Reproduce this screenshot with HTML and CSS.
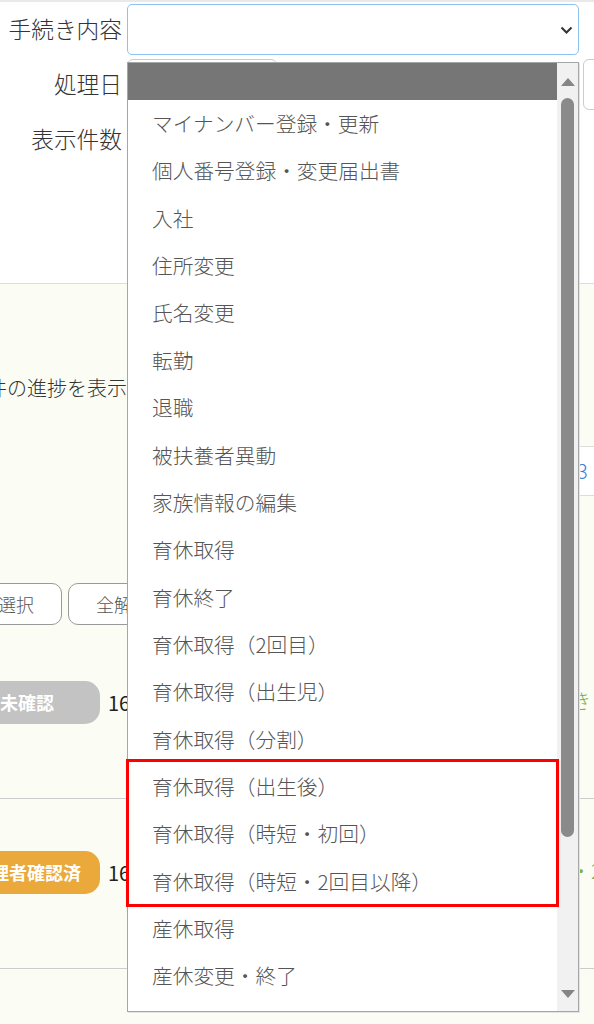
FILE: index.html
```html
<!DOCTYPE html>
<html lang="ja">
<head>
    <meta charset="UTF-8">
    <meta name="viewport" content="width=device-width, initial-scale=1.0">
    <title>手続き一覧</title>
    <link rel="stylesheet" href="styles.css">
</head>
<body>
    <section class="search">
        <div class="field">
            <label class="field-label">手続き内容</label>
            <div class="select">
                <svg class="chevron" width="13" height="8" viewBox="0 0 13 8"><polyline points="1.5,1.5 6.5,6.5 11.5,1.5" fill="none" stroke="#333" stroke-width="2"/></svg>
            </div>
        </div>
        <div class="field">
            <label class="field-label">処理日</label>
            <div class="date-range">
                <div class="input date-input"></div>
                <span class="tilde">～</span>
                <div class="input period-btn"></div>
            </div>
        </div>
        <div class="field">
            <label class="field-label">表示件数</label>
            <div class="input count-input"></div>
        </div>
    </section>

    <section class="results">
        <p class="summary">件の進捗を表示しています</p>
        <div class="pager">
            <span class="pager-item">3</span>
        </div>
        <div class="actions">
            <button class="action-btn">全選択</button>
            <button class="action-btn">全解除</button>
        </div>
        <div class="task-list">
            <div class="task-row">
                <span class="badge badge-gray">未確認</span>
                <span class="task-num">16</span>
                <span class="task-link">育休取得の手続き</span>
            </div>
            <div class="task-row">
                <span class="badge badge-orange">管理者確認済</span>
                <span class="task-num">16</span>
                <span class="task-link">育休取得（時短・2回目以降）</span>
            </div>
        </div>
    </section>

    <div class="dropdown">
        <ul class="options">
            <li class="option is-active"></li>
            <li class="option">マイナンバー登録・更新</li>
            <li class="option">個人番号登録・変更届出書</li>
            <li class="option">入社</li>
            <li class="option">住所変更</li>
            <li class="option">氏名変更</li>
            <li class="option">転勤</li>
            <li class="option">退職</li>
            <li class="option">被扶養者異動</li>
            <li class="option">家族情報の編集</li>
            <li class="option">育休取得</li>
            <li class="option">育休終了</li>
            <li class="option">育休取得（2回目）</li>
            <li class="option">育休取得（出生児）</li>
            <li class="option">育休取得（分割）</li>
            <li class="option">育休取得（出生後）</li>
            <li class="option">育休取得（時短・初回）</li>
            <li class="option">育休取得（時短・2回目以降）</li>
            <li class="option">産休取得</li>
            <li class="option">産休変更・終了</li>
        </ul>
        <div class="scrollbar">
            <div class="scroll-arrow scroll-up">
                <svg width="14" height="8" viewBox="0 0 14 8"><polygon points="7,0 14,8 0,8" fill="#858585"/></svg>
            </div>
            <div class="scroll-thumb"></div>
            <div class="scroll-rest"></div>
            <div class="scroll-arrow">
                <svg width="14" height="8" viewBox="0 0 14 8"><polygon points="0,0 14,0 7,8" fill="#858585"/></svg>
            </div>
        </div>
    </div>

    <div class="highlight"></div>
</body>
</html>
```

FILE: styles.css
```css
:root {
    --text: #333333;
    --option-text: #555555;
    --line: #cccccc;
    --cream: #fbfdf4;
    --link: #7cb342;
}

* {
    box-sizing: border-box;
}

body {
    margin: 0;
    height: 1024px;
    font-family: "Noto Sans CJK JP", "Noto Sans", sans-serif;
    font-weight: 300;
    color: var(--text);
    background: var(--cream);
    overflow: hidden;
    position: relative;
}

/* search form */
.search {
    height: 284px;
    padding-top: 2px;
    background: #fff;
    border-top: 2px solid #e9e9e9;
    border-bottom: 1px solid #dddddd;
    display: flex;
    flex-direction: column;
    gap: 4px;
}

.field {
    display: grid;
    grid-template-columns: 122px 1fr;
    column-gap: 5px;
    height: 51px;
    align-items: center;
}

.field-label {
    text-align: right;
    font-size: 22.7px;
    line-height: 1;
    white-space: nowrap;
}

.select {
    height: 51px;
    margin-right: 15px;
    border: 1px solid #8ec1f2;
    border-radius: 5px;
    background: #fff;
    display: flex;
    align-items: center;
    justify-content: flex-end;
    padding-right: 5px;
}

.input {
    height: 51px;
    border: 1px solid #cccccc;
    border-radius: 6px;
    background: #fff;
}

.date-range {
    display: flex;
    align-items: center;
}

.date-input {
    width: 150px;
    flex: none;
}

.tilde {
    width: 40px;
    text-align: center;
    font-size: 20px;
}

.period-btn {
    flex: none;
    width: 60px;
    margin-left: auto;
    margin-right: -49px;
}

.count-input {
    width: 150px;
}

/* results */
.results {
    display: flex;
    flex-direction: column;
}

.summary {
    margin: 0 0 0 -13px;
    height: 162px;
    padding-top: 89px;
    font-size: 20px;
    line-height: 30px;
    white-space: nowrap;
}

.pager {
    display: flex;
    height: 50px;
    padding-left: 566px;
}

.pager-item {
    border: 1px solid #dddddd;
    border-right: none;
    background: #fff;
    padding: 0 10px;
    line-height: 48px;
    font-size: 20px;
    color: #3a7bd5;
}

.actions {
    display: flex;
    gap: 6px;
    margin-top: 87px;
    margin-left: -48px;
}

.action-btn {
    height: 42px;
    padding: 0 27px;
    border: 1px solid #999999;
    border-radius: 10px;
    background: #fff;
    font-family: inherit;
    font-weight: 300;
    font-size: 18px;
    color: var(--option-text);
}

.task-list {
    margin-top: 4px;
}

.task-row {
    display: flex;
    align-items: flex-start;
    height: 170px;
    padding-top: 52px;
    border-bottom: 1px solid var(--line);
    white-space: nowrap;
}

.badge {
    flex: none;
    width: 146px;
    height: 43px;
    margin-left: -46px;
    border-radius: 15px;
    line-height: 43px;
    text-align: center;
    font-size: 18px;
    font-weight: bold;
    color: #fff;
}

.badge-gray {
    background: #c3c3c3;
}

.badge-orange {
    background: #eaa93a;
}

.task-num {
    flex: none;
    width: 323px;
    margin-left: 8px;
    line-height: 43px;
    font-size: 20px;
    font-weight: 400;
    color: #222222;
}

.task-link {
    line-height: 40px;
    font-size: 20px;
    color: var(--link);
}

/* opened select list */
.dropdown {
    position: absolute;
    left: 127px;
    top: 62px;
    width: 452px;
    height: 950px;
    border: 1px solid #a6a6a6;
    background: #fff;
    display: flex;
    box-shadow: 1px 1px 0 #e4e4e4;
}

.options {
    flex: 1;
    margin: 0;
    padding: 0;
    list-style: none;
    overflow: hidden;
}

.option {
    height: 47.37px;
    line-height: 47.37px;
    padding-left: 24px;
    font-size: 20.7px;
    color: var(--option-text);
    white-space: nowrap;
}

.option.is-active {
    height: 37px;
    background: #767676;
}

.scrollbar {
    flex: none;
    width: 21px;
    background: #f1f1f1;
    display: flex;
    flex-direction: column;
    align-items: center;
}

.scroll-arrow {
    flex: none;
    height: 35px;
    display: flex;
    align-items: center;
    justify-content: center;
}

.scroll-up {
    padding-top: 3px;
}

.scroll-thumb {
    flex: none;
    width: 13px;
    height: 739px;
    border-radius: 7px;
    background: #8a8a8a;
}

.scroll-rest {
    flex: 1;
}

.highlight {
    position: absolute;
    left: 126px;
    top: 759px;
    width: 433px;
    height: 148px;
    border: 3px solid #ff0000;
}
```
